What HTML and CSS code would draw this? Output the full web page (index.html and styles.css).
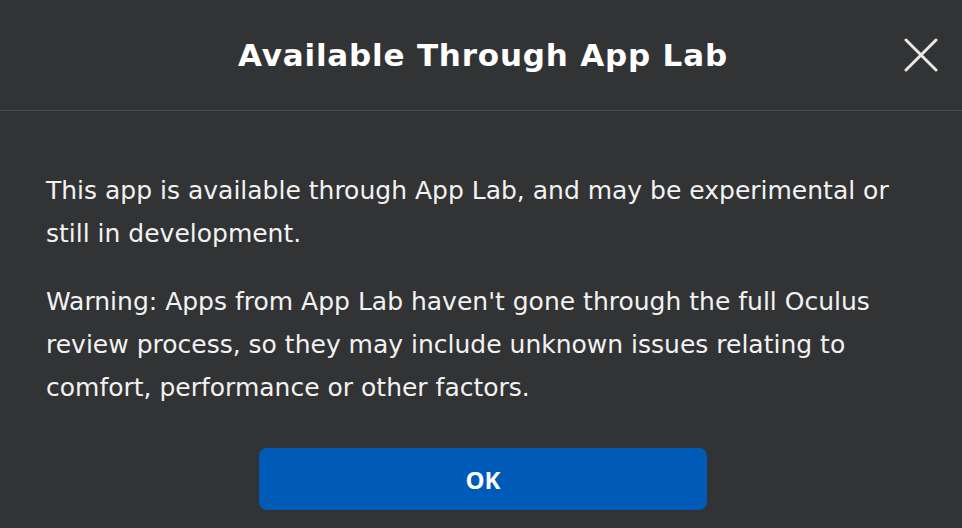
FILE: index.html
```html
<!DOCTYPE html>
<html lang="en">
<head>
    <meta charset="UTF-8">
    <title>Available Through App Lab</title>
    <link rel="stylesheet" href="styles.css">
</head>
<body>
    <div class="dialog">
        <div class="header">
            <h2>Available Through App Lab</h2>
            <button class="close" aria-label="Close">
                <svg width="34" height="34" viewBox="0 0 34 34"><path d="M2 2 L32 32 M32 2 L2 32" stroke="#e8e8e8" stroke-width="3" stroke-linecap="round"/></svg>
            </button>
        </div>
        <div class="content">
            <p>This app is available through App Lab, and may be experimental or still in development.</p>
            <p>Warning: Apps from App Lab haven't gone through the full Oculus review process, so they may include unknown issues relating to comfort, performance or other factors.</p>
            <div class="actions">
                <button class="ok">OK</button>
            </div>
        </div>
    </div>
</body>
</html>
```

FILE: styles.css
```css
body { margin: 0; background: #323335; font-family: "DejaVu Sans", "Liberation Sans", sans-serif; color: #f2f2f2; }
.dialog { width: 962px; height: 528px; overflow: hidden; }
.header { height: 110px; padding-left: 4px; border-bottom: 1px solid #4a4b4d; display: flex; align-items: center; justify-content: center; position: relative; }
.header h2 { margin: 0; font-size: 31px; font-weight: 700; letter-spacing: 0.8px; color: #fff; }
.close { position: absolute; right: 24px; top: 38px; background: none; border: none; padding: 0; width: 34px; height: 34px; cursor: pointer; }
.content { padding: 58px 42px 0 46px; }
.content p { margin: 0 0 25px; font-size: 25px; line-height: 43px; }
.actions { display: flex; justify-content: center; margin-top: 39px; }
.ok { width: 448px; height: 62px; border: none; border-radius: 8px; background: #005ab8; color: #fff; font-family: "Open Sans", sans-serif; font-size: 24px; font-weight: 700; }
```
